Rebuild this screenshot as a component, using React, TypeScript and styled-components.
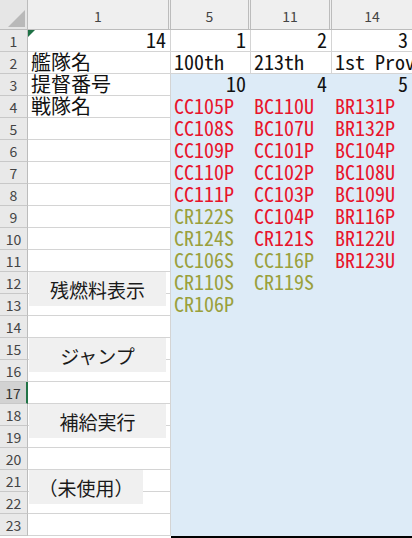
import styled, { createGlobalStyle } from "styled-components";

type Ship = [string, "r" | "g"];

interface Fleet {
    col: string;
    id: number;
    name: string;
    admiral: number;
    ships: Ship[];
}

const fleets: Fleet[] = [
    {
        col: "5",
        id: 1,
        name: "100th",
        admiral: 10,
        ships: [
            ["CC105P", "r"],
            ["CC108S", "r"],
            ["CC109P", "r"],
            ["CC110P", "r"],
            ["CC111P", "r"],
            ["CR122S", "g"],
            ["CR124S", "g"],
            ["CC106S", "g"],
            ["CR110S", "g"],
            ["CR106P", "g"],
        ],
    },
    {
        col: "11",
        id: 2,
        name: "213th",
        admiral: 4,
        ships: [
            ["BC110U", "r"],
            ["BC107U", "r"],
            ["CC101P", "r"],
            ["CC102P", "r"],
            ["CC103P", "r"],
            ["CC104P", "r"],
            ["CR121S", "r"],
            ["CC116P", "g"],
            ["CR119S", "g"],
        ],
    },
    {
        col: "14",
        id: 3,
        name: "1st Prov",
        admiral: 5,
        ships: [
            ["BR131P", "r"],
            ["BR132P", "r"],
            ["BC104P", "r"],
            ["BC108U", "r"],
            ["BC109U", "r"],
            ["BR116P", "r"],
            ["BR122U", "r"],
            ["BR123U", "r"],
        ],
    },
];

const labels: Record<number, string> = {
    2: "艦隊名",
    3: "提督番号",
    4: "戦隊名",
};

const buttons = [
    { text: "残燃料表示", top: 272, width: 137 },
    { text: "ジャンプ", top: 338, width: 137 },
    { text: "補給実行", top: 404, width: 137 },
    { text: "（未使用）", top: 470, width: 114 },
];

const ROWS = 23;
const ACTIVE_ROW = 17;

export default function App() {
    const rows = Array.from({ length: ROWS }, (_, i) => i + 1);

    return (
        <>
            <GlobalStyle />
            <Sheet>
                <Corner>
                    <svg width="28" height="30" viewBox="0 0 28 30">
                        <polygon points="8,27 25,27 25,10" fill="#b9b9b9" />
                    </svg>
                </Corner>
                <ColHead $double>1</ColHead>
                {fleets.map((f) => (
                    <ColHead key={f.col} $double={f.col !== "14"}>
                        {f.col}
                    </ColHead>
                ))}

                {rows.map((r) => (
                    <Row key={r} r={r} />
                ))}

                <EdgeLeft />
                <EdgeStrip />

                {buttons.map((b) => (
                    <ShapeButton
                        key={b.text}
                        style={{ top: b.top, width: b.width }}
                    >
                        {b.text}
                    </ShapeButton>
                ))}
            </Sheet>
        </>
    );
}

function Row({ r }: { r: number }) {
    return (
        <>
            <RowHead $active={r === ACTIVE_ROW}>{r}</RowHead>
            {r === 1 ? (
                <Cell $align="right">
                    <ErrorMark />
                    14
                </Cell>
            ) : (
                <Cell>{labels[r] ?? ""}</Cell>
            )}
            {fleets.map((f) => {
                if (r === 1) {
                    return (
                        <Cell key={f.col} $align="right">
                            {f.id}
                        </Cell>
                    );
                }
                if (r === 2) {
                    return <Cell key={f.col}>{f.name}</Cell>;
                }
                if (r === 3) {
                    return (
                        <Cell key={f.col} $align="right" $fill>
                            {f.admiral}
                        </Cell>
                    );
                }
                const ship = f.ships[r - 4];
                return (
                    <Cell key={f.col} $fill $tone={ship?.[1]}>
                        {ship ? ship[0] : ""}
                    </Cell>
                );
            })}
        </>
    );
}

const GlobalStyle = createGlobalStyle`
    html, body {
        margin: 0;
        padding: 0;
        background: #ffffff;
        overflow: hidden;
    }
    * {
        box-sizing: border-box;
    }
`;

const Sheet = styled.div`
    position: relative;
    display: grid;
    grid-template-columns: 28px 143px 80px 81px 81px;
    grid-template-rows: 30px repeat(23, 22px) 2px;
    width: 413px;
    font-family: "Noto Sans Mono CJK JP", "Noto Sans CJK JP", "DejaVu Sans Mono", monospace;
`;

const Corner = styled.div`
    background: #e6e6e6;
    border-right: 1px solid #bcbcbc;
    border-bottom: 1px solid #bcbcbc;
    svg {
        display: block;
    }
`;

const ColHead = styled.div<{ $double?: boolean }>`
    background: #efefef;
    border-bottom: 1px solid #bcbcbc;
    border-right: ${(p) => (p.$double ? "3px double #bcbcbc" : "1px solid #cfcfcf")};
    display: flex;
    align-items: center;
    justify-content: center;
    padding-top: 2px;
    font-family: "Noto Sans CJK JP", "Liberation Sans", sans-serif;
    font-size: 14px;
    color: #444444;
`;

const RowHead = styled.div<{ $active?: boolean }>`
    background: ${(p) => (p.$active ? "#d2d2d2" : "#e9e9e9")};
    border-bottom: 1px solid #c8c8c8;
    border-right: ${(p) => (p.$active ? "2px solid #217346" : "1px solid #bcbcbc")};
    display: flex;
    align-items: center;
    justify-content: center;
    font-family: "Noto Sans CJK JP", "Liberation Sans", sans-serif;
    font-size: 14px;
    line-height: 1;
    color: ${(p) => (p.$active ? "#333333" : "#444444")};
`;

const Cell = styled.div<{
    $align?: "left" | "right";
    $fill?: boolean;
    $tone?: "r" | "g";
}>`
    position: relative;
    background: ${(p) => (p.$fill ? "#ddebf7" : "#ffffff")};
    border-right: 1px solid ${(p) => (p.$fill ? "#ddebf7" : "#d4d4d4")};
    border-bottom: 1px solid ${(p) => (p.$fill ? "#ddebf7" : "#d4d4d4")};
    padding: 0 4px 0 3px;
    display: flex;
    align-items: flex-end;
    justify-content: ${(p) => (p.$align === "right" ? "flex-end" : "flex-start")};
    font-size: 20px;
    line-height: 22px;
    white-space: nowrap;
    overflow: visible;
    color: ${(p) =>
        p.$tone === "r" ? "#e8142c" : p.$tone === "g" ? "#9aa03c" : "#111111"};
`;

const ErrorMark = styled.span`
    position: absolute;
    top: 0;
    left: 0;
    width: 0;
    height: 0;
    border-top: 7px solid #1e7145;
    border-right: 7px solid transparent;
`;

const EdgeLeft = styled.div`
    grid-column: 1 / 3;
    background: #ffffff;
`;

const EdgeStrip = styled.div`
    grid-column: 3 / -1;
    background: #000000;
`;

const ShapeButton = styled.div`
    position: absolute;
    left: 29px;
    height: 34px;
    background: #f0f0f0;
    display: flex;
    align-items: center;
    justify-content: center;
    font-family: "Noto Sans CJK JP", sans-serif;
    font-size: 19px;
    color: #1a1a1a;
`;
